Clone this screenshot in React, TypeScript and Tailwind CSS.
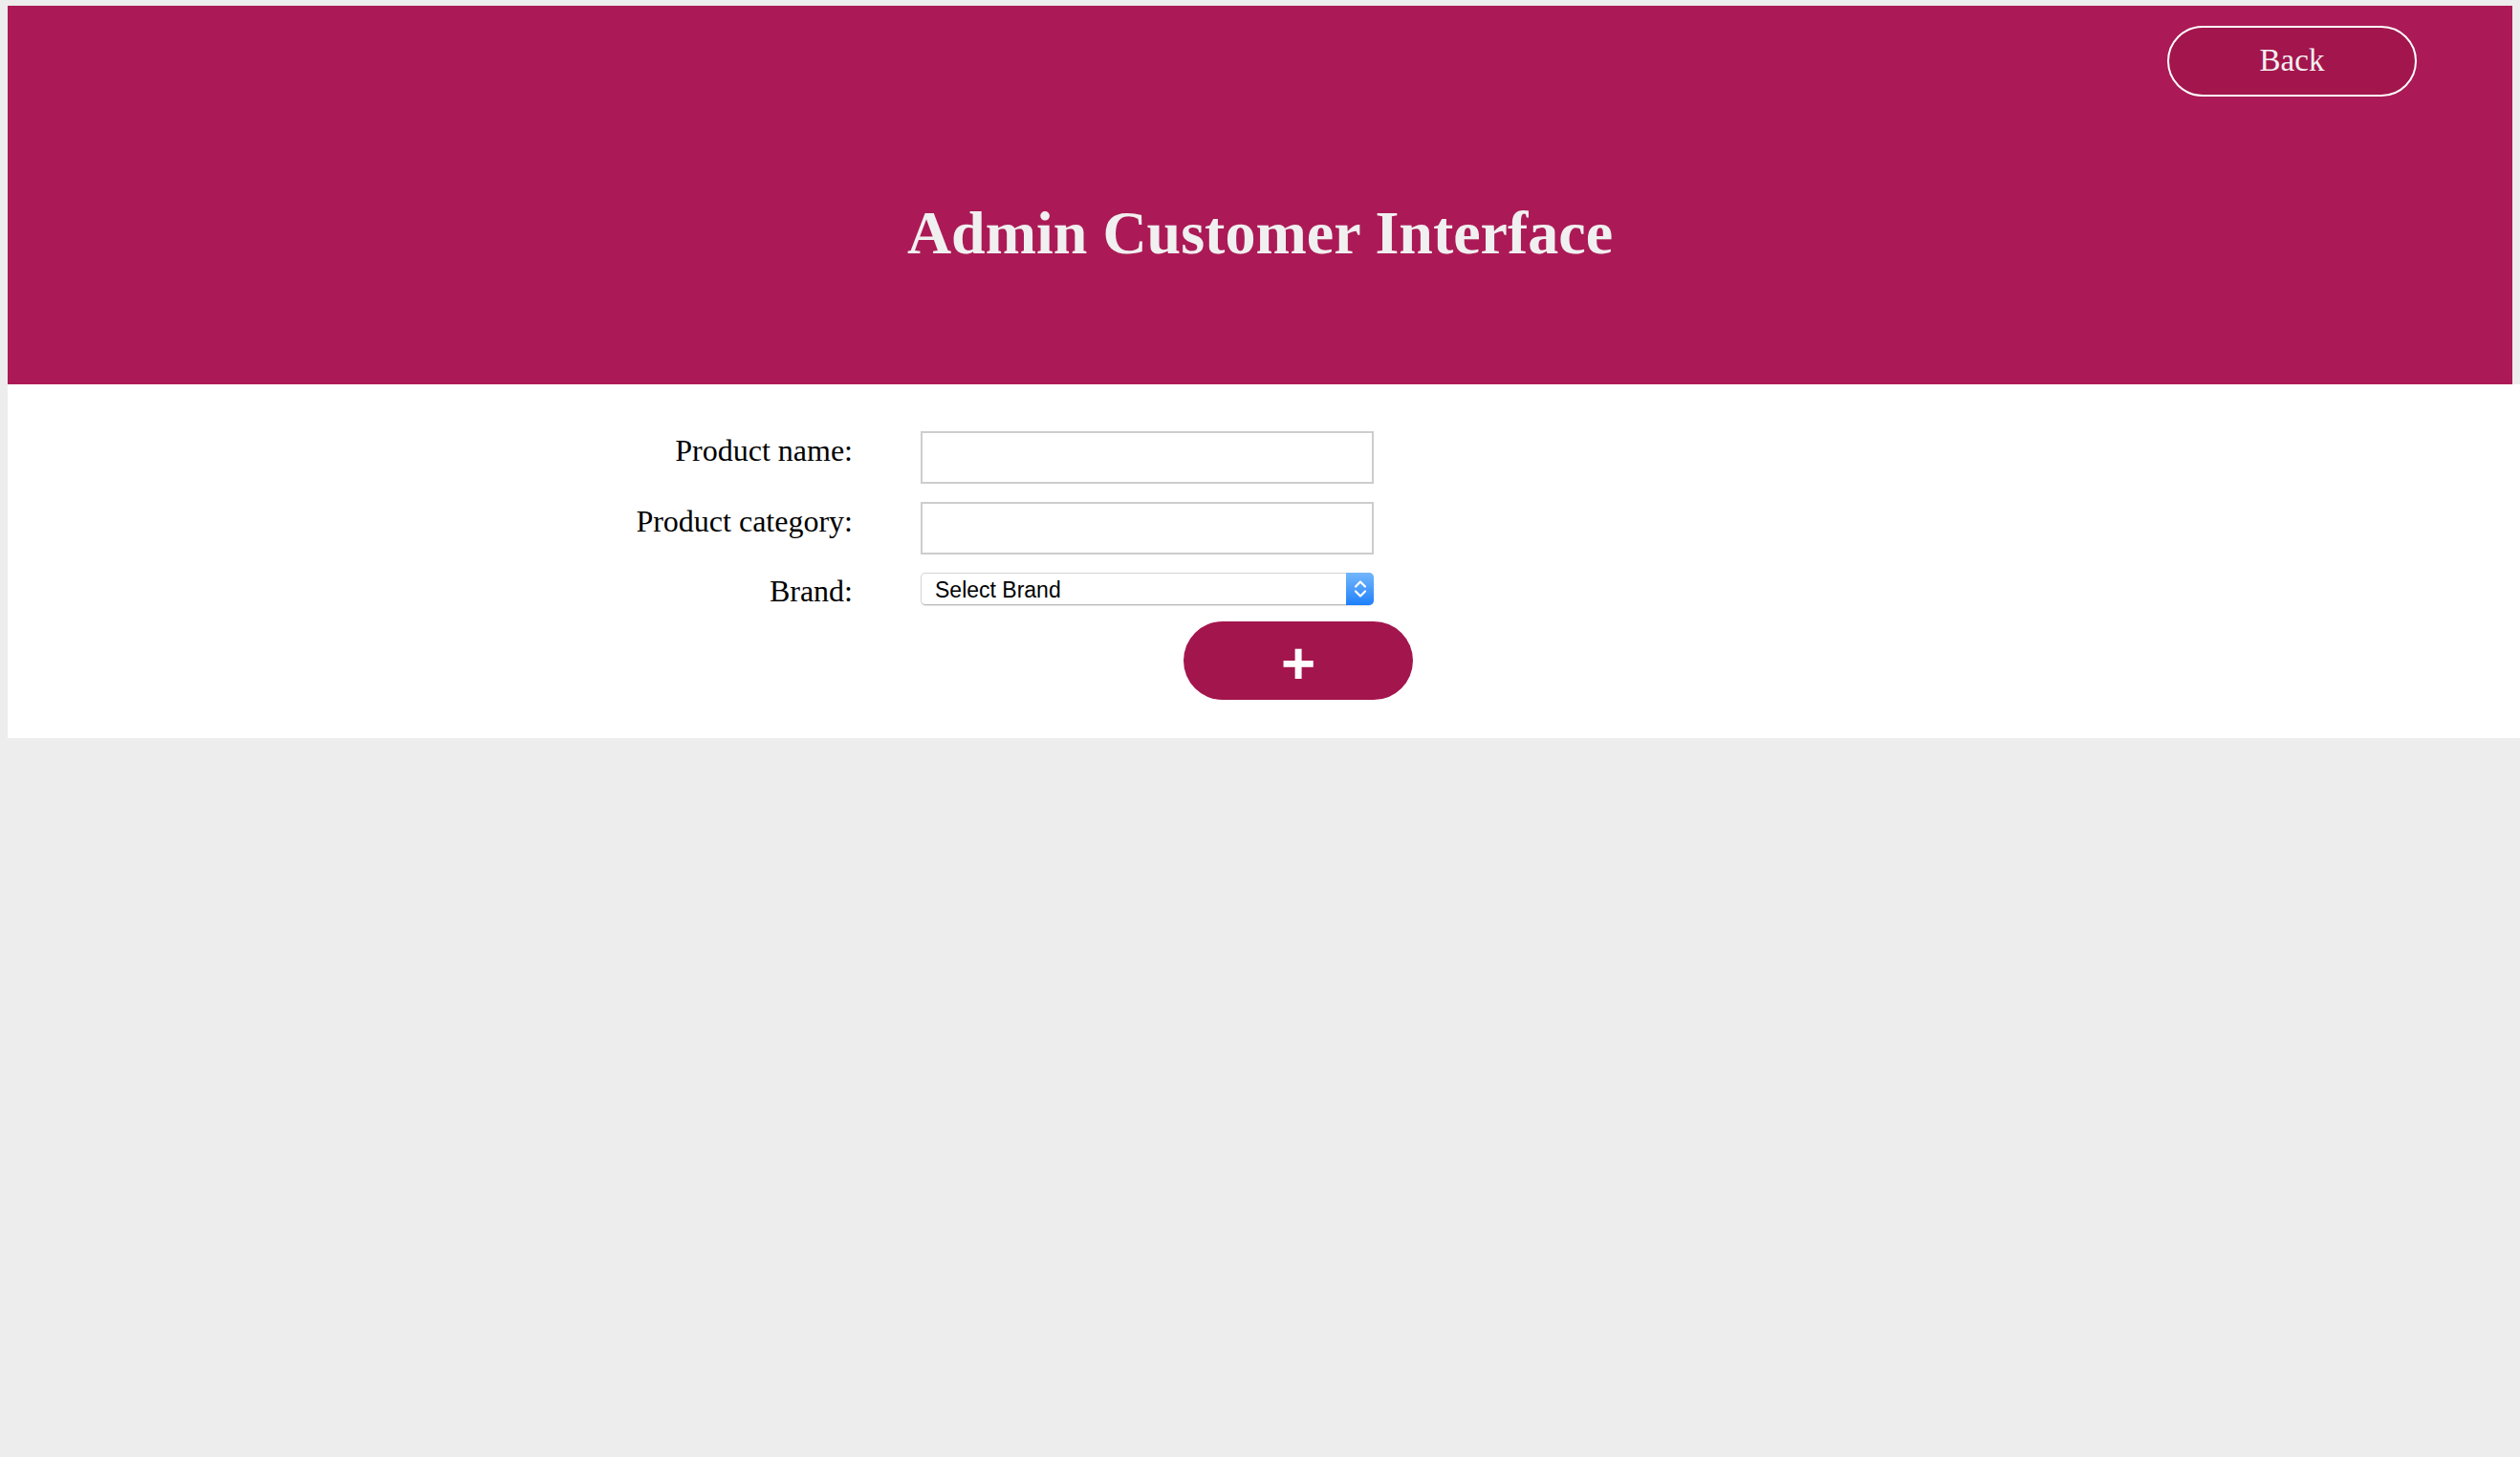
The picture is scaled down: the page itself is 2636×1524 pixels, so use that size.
export default function App() {
  return (
    <div className="min-h-screen bg-[#ededed] pl-[8px] pt-[6px] font-['Liberation_Serif',serif]">
      <header className="flex h-[396px] w-[2620px] flex-col bg-[#ab1a56] pt-[21px]">
        <div className="flex justify-end pr-[100px]">
          <button className="h-[74px] w-[261px] rounded-full border-2 border-white bg-[#a3154d] text-[33px] text-[#f0f0f0]">
            Back
          </button>
        </div>
        <h1 className="mt-[111px] text-center text-[64px] font-bold leading-none text-[#f0f0f0]">
          Admin Customer Interface
        </h1>
      </header>

      <main className="h-[370px] bg-white pt-[49px]">
        <form className="grid grid-cols-[884px_474px] grid-rows-[55px_55px_34px] gap-x-[71px] gap-y-[19px]">
          <label className="pt-[2px] text-right text-[32px] leading-[37px] text-black">Product name:</label>
          <input type="text" className="h-[55px] w-[474px] border-2 border-[#cdcdcd] bg-white outline-none" />

          <label className="pt-[2px] text-right text-[32px] leading-[37px] text-black">Product category:</label>
          <input type="text" className="h-[55px] w-[474px] border-2 border-[#cdcdcd] bg-white outline-none" />

          <label className="pt-[1px] text-right text-[32px] leading-[37px] text-black">Brand:</label>
          <div className="relative h-[34px] w-[474px]">
            <select className="h-full w-full appearance-none rounded-[5px] border border-[#d4d4d4] border-b-[#b8b8b8] bg-white pl-[14px] font-['Liberation_Sans',sans-serif] text-[23px] text-black shadow-[0_1px_1px_rgba(0,0,0,0.1)] outline-none">
              <option>Select Brand</option>
            </select>
            <div className="pointer-events-none absolute right-0 top-0 flex h-full w-[29px] items-center justify-center rounded-r-[5px] bg-linear-to-b from-[#72b6fb] to-[#1a80fb]">
              <svg width="14" height="20" viewBox="0 0 14 20" fill="none" stroke="white" strokeWidth="2.2" strokeLinecap="round" strokeLinejoin="round">
                <path d="M2 7.5 7 2.5 12 7.5" />
                <path d="M2 12.5 7 17.5 12 12.5" />
              </svg>
            </div>
          </div>
        </form>

        <button className="ml-[1230px] mt-[17px] flex h-[82px] w-[240px] items-center justify-center rounded-full bg-[#a3154d] pt-[6px] font-['Liberation_Sans',sans-serif] text-[62px] font-bold leading-none text-white">
          +
        </button>
      </main>
    </div>
  )
}
